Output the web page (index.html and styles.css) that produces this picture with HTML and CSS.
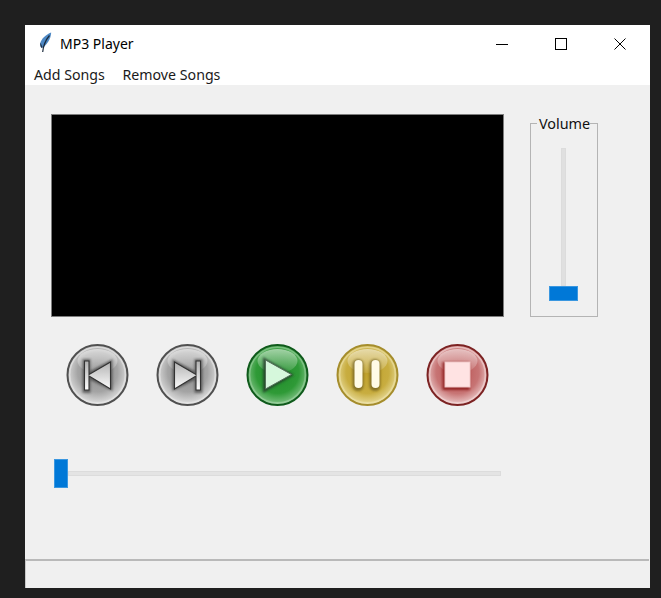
FILE: index.html
```html
<!DOCTYPE html>
<html lang="en">
<head>
<meta charset="utf-8">
<title>MP3 Player</title>
<link rel="stylesheet" href="styles.css">
</head>
<body>
<svg class="defs" width="0" height="0" aria-hidden="true">
  <defs>
    <radialGradient id="grey" cx="50%" cy="45%" r="55%">
      <stop offset="0" stop-color="#8d8d8d"/><stop offset=".6" stop-color="#a4a4a4"/><stop offset=".9" stop-color="#d4d4d4"/><stop offset="1" stop-color="#ececec"/>
    </radialGradient>
    <radialGradient id="green" cx="50%" cy="45%" r="55%">
      <stop offset="0" stop-color="#1f8a28"/><stop offset=".65" stop-color="#2f9a37"/><stop offset=".9" stop-color="#6cb872"/><stop offset="1" stop-color="#a8d8ac"/>
    </radialGradient>
    <radialGradient id="gold" cx="50%" cy="45%" r="55%">
      <stop offset="0" stop-color="#bfa02c"/><stop offset=".65" stop-color="#c8ad40"/><stop offset=".9" stop-color="#e0d084"/><stop offset="1" stop-color="#f3ebc4"/>
    </radialGradient>
    <radialGradient id="red" cx="50%" cy="45%" r="55%">
      <stop offset="0" stop-color="#b85050"/><stop offset=".65" stop-color="#c77474"/><stop offset=".9" stop-color="#e2b4b4"/><stop offset="1" stop-color="#f4dcdc"/>
    </radialGradient>
    <linearGradient id="gloss" x1="0" y1="0" x2="0" y2="1">
      <stop offset="0" stop-color="#fff" stop-opacity=".55"/><stop offset="1" stop-color="#fff" stop-opacity=".08"/>
    </linearGradient>
    <linearGradient id="tri" x1="0" y1="0" x2="0" y2="1">
      <stop offset="0" stop-color="#b0b0b0"/><stop offset="1" stop-color="#fff"/>
    </linearGradient>
    <filter id="soft" x="-30%" y="-30%" width="160%" height="160%"><feGaussianBlur stdDeviation="1.200"/></filter>
    <filter id="crisp" x="-10%" y="-10%" width="120%" height="120%"><feGaussianBlur stdDeviation=".45"/></filter>
  </defs>
</svg>
<div class="window">
  <header class="titlebar">
    <svg class="feather" viewBox="0 0 16 21" width="16" height="21">
      <path d="M13.200.500C8 2.500 3 7 2.200 11.500c-.2 1.500.2 3 1 4.300l1.300-.3C9 13 12.800 7 13.200.500z" fill="#4d88c4"/>
      <path d="M11.500 3.500C8.500 7 5.500 12 4.700 20" fill="none" stroke="#1a2a3c" stroke-width="1.200"/>
      <path d="M2.400 10.500c-.4 2 0 3.800.8 5.300l1.500-.4z" fill="#22344a"/>
    </svg>
    <span class="app-title">MP3 Player</span>
    <div class="win-controls">
      <svg class="win-btn" viewBox="0 0 12 12" width="12" height="12"><path d="M0 6.500h12" stroke="#000" fill="none"/></svg>
      <svg class="win-btn" viewBox="0 0 12 12" width="12" height="12"><rect x=".5" y=".5" width="11" height="11" stroke="#000" fill="none"/></svg>
      <svg class="win-btn" viewBox="0 0 12 12" width="12" height="12"><path d="M.5.500l11 11M11.500.500l-11 11" stroke="#000" fill="none"/></svg>
    </div>
  </header>
  <nav class="menubar">
    <span class="menu-item">Add Songs</span>
    <span class="menu-item">Remove Songs</span>
  </nav>
  <main class="content">
    <section class="top-row">
      <div class="screen"></div>
      <fieldset class="volume">
        <legend class="volume-label">Volume</legend>
        <div class="vtrack"></div>
        <div class="vhandle"></div>
      </fieldset>
    </section>
    <section class="transport">
      <svg class="tbtn" viewBox="0 0 62 62" width="63" height="62" role="img" aria-label="Previous">
        <circle cx="31" cy="31" r="30" fill="url(#grey)" stroke="#505050" stroke-width="2"/>
        <circle cx="31" cy="31" r="27.800" fill="none" stroke="#e6e6e6" stroke-opacity=".7" stroke-width="1.400" filter="url(#crisp)"/>
        <ellipse cx="31" cy="17" rx="20" ry="12" fill="url(#gloss)"/>
        <path d="M16 15v34h8V36l22 11V15L24 27V15z" fill="#2a2a2a" opacity=".55" filter="url(#soft)"/>
        <path d="M18 17v29h4.500V32L44 45V18L22.500 30.500V17z" fill="url(#tri)" stroke="#333" stroke-width="1.100" filter="url(#crisp)"/>
      </svg>
      <svg class="tbtn" viewBox="0 0 62 62" width="63" height="62" role="img" aria-label="Next">
        <circle cx="31" cy="31" r="30" fill="url(#grey)" stroke="#505050" stroke-width="2"/>
        <circle cx="31" cy="31" r="27.800" fill="none" stroke="#e6e6e6" stroke-opacity=".7" stroke-width="1.400" filter="url(#crisp)"/>
        <ellipse cx="31" cy="17" rx="20" ry="12" fill="url(#gloss)"/>
        <path d="M46 15v34h-8V36L16 47V15l22 12V15z" fill="#2a2a2a" opacity=".55" filter="url(#soft)"/>
        <path d="M44 17v29h-4.500V32L18 45V18l21.500 12.500V17z" fill="url(#tri)" stroke="#333" stroke-width="1.100" filter="url(#crisp)"/>
      </svg>
      <svg class="tbtn" viewBox="0 0 62 62" width="63" height="62" role="img" aria-label="Play">
        <circle cx="31" cy="31" r="30" fill="url(#green)" stroke="#0f5a1b" stroke-width="2"/>
        <circle cx="31" cy="31" r="27.800" fill="none" stroke="#a8d8ac" stroke-opacity=".5" stroke-width="1.400" filter="url(#crisp)"/>
        <ellipse cx="31" cy="17" rx="20" ry="12" fill="url(#gloss)"/>
        <path d="M16.500 13v36l31-18z" fill="#24382a" opacity=".75" filter="url(#soft)"/>
        <path d="M19 16v29l26-14.500z" fill="#d6f8dc" stroke="#55705a" stroke-width="1" filter="url(#crisp)"/>
      </svg>
      <svg class="tbtn" viewBox="0 0 62 62" width="63" height="62" role="img" aria-label="Pause">
        <circle cx="31" cy="31" r="30" fill="url(#gold)" stroke="#a58d2c" stroke-width="2"/>
        <circle cx="31" cy="31" r="27.800" fill="none" stroke="#eee2a8" stroke-opacity=".6" stroke-width="1.400" filter="url(#crisp)"/>
        <ellipse cx="31" cy="17" rx="20" ry="12" fill="url(#gloss)"/>
        <rect x="16" y="15" width="11" height="32" rx="5.500" fill="#5c4d14" opacity=".6" filter="url(#soft)"/>
        <rect x="33" y="15" width="11" height="32" rx="5.500" fill="#5c4d14" opacity=".6" filter="url(#soft)"/>
        <rect x="18" y="16" width="8" height="28" rx="4" fill="#fffbe6" filter="url(#crisp)"/>
        <rect x="35" y="16" width="8" height="28" rx="4" fill="#fffbe6" filter="url(#crisp)"/>
      </svg>
      <svg class="tbtn" viewBox="0 0 62 62" width="63" height="62" role="img" aria-label="Stop">
        <circle cx="31" cy="31" r="30" fill="url(#red)" stroke="#7c2323" stroke-width="2"/>
        <circle cx="31" cy="31" r="27.800" fill="none" stroke="#f3d9d9" stroke-opacity=".6" stroke-width="1.400" filter="url(#crisp)"/>
        <ellipse cx="31" cy="17" rx="20" ry="12" fill="url(#gloss)"/>
        <rect x="16" y="18" width="27" height="28" fill="#8a1818" opacity=".8" filter="url(#soft)"/>
        <rect x="18.500" y="18" width="25" height="25" fill="#ffe3e3" stroke="#f0c8c8" stroke-width="1" filter="url(#crisp)"/>
      </svg>
    </section>
    <section class="seek">
      <div class="shandle"></div>
      <div class="strack"></div>
    </section>
  </main>
  <footer class="statusbar"></footer>
</div>
</body>
</html>
```

FILE: styles.css
```css
* { box-sizing: border-box; }

html, body { margin: 0; height: 100%; }

body {
  background: #1f1f1f;
  padding: 25px 11px 10px 25px;
  font-family: "Noto Sans", "Open Sans", sans-serif;
  font-size: 14.2px;
  color: #000;
  overflow: hidden;
}

.defs { display: block; height: 0; }

.window {
  height: 563px;
  width: 625px;
  display: flex;
  flex-direction: column;
  background: #f0f0f0;
}

.titlebar {
  height: 30px;
  flex: none;
  background: #fff;
  display: flex;
  align-items: center;
  padding-left: 13px;
  padding-top: 8px;
}

.feather { flex: none; margin-top: -4px; }

.app-title {
  margin-left: 6px;
  font-size: 14px;
  line-height: 20px;
}

.win-controls {
  margin-left: auto;
  display: flex;
  gap: 47px;
  padding-right: 24px;
}

.menubar {
  height: 30px;
  flex: none;
  background: #fff;
  display: flex;
  gap: 17.6px;
  padding-left: 9px;
  padding-top: 9px;
  align-items: center;
  color: #1a1a1a;
}

.menu-item { line-height: 20px; }

.content {
  flex: 1;
  padding: 29px 0 0 26px;
  display: flex;
  flex-direction: column;
}

.top-row {
  display: flex;
  align-items: flex-start;
  gap: 26px;
}

.screen {
  width: 453px;
  height: 203px;
  background: #000;
  border: 1px solid #7d7d7d;
}

.volume {
  margin: -1px 0 0;
  width: 68px;
  height: 204px;
  padding: 15px 1px 15px 0;
  border: 1px solid #b4b4b4;
  display: flex;
  flex-direction: column;
  align-items: center;
}

.volume-label {
  padding: 2px 0 0 2px;
  margin: 0 auto;
  font-size: 14.4px;
  line-height: 18px;
  color: #111;
}

.vtrack {
  flex: 1;
  width: 5px;
  background: #e0e0e0;
  border: 1px solid #dcdcdc;
}

.vhandle {
  width: 29px;
  height: 15px;
  flex: none;
  background: #0078d7;
  border: 1px solid #3a97e0;
}

.transport {
  margin-top: 27px;
  padding-left: 15px;
  display: flex;
  gap: 27px;
}

.tbtn {
  flex: none;
  display: block;
  filter: blur(.35px);
}

.seek {
  margin-top: 53px;
  margin-left: 3px;
  width: 447px;
  height: 29px;
  display: flex;
  align-items: center;
}

.shandle {
  width: 14px;
  height: 29px;
  flex: none;
  background: #0078d7;
  border: 1px solid #3a97e0;
}

.strack {
  flex: 1;
  height: 5px;
  background: #e4e4e4;
  border: 1px solid #dcdcdc;
}

.statusbar {
  height: 29px;
  flex: none;
  margin-right: 1px;
  border-top: 2px solid #b9b9b9;
  border-left: 1px solid #c8c8c8;
}
```
